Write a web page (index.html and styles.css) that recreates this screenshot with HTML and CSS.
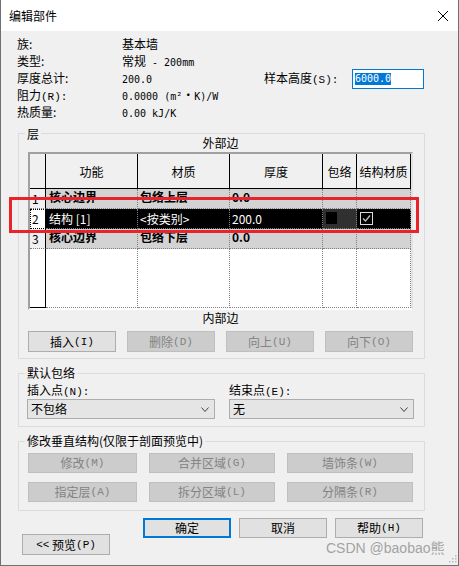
FILE: index.html
```html
<!DOCTYPE html>
<html lang="zh-CN">
<head>
<meta charset="utf-8">
<title>编辑部件</title>
<link rel="stylesheet" href="styles.css">
</head>
<body>
<div class="window">
  <div class="titlebar">
    <span class="title">编辑部件</span>
    <svg class="close" width="10" height="10" viewBox="0 0 10 10"><path d="M0 0L10 10M10 0L0 10" stroke="#000" stroke-width="1" fill="none"/></svg>
  </div>
  <div class="client">
    <div class="info">
      <div class="k">族:</div><div>基本墙</div>
      <div class="k">类型:</div><div>常规<span class="n"> - 200mm</span></div>
      <div class="k">厚度总计:</div><div><span class="n">200.0</span></div><div class="k2">样本高度<span class="m">(S):</span></div><div class="input"><span class="hl">6000.0</span></div>
      <div class="k">阻力<span class="m">(R):</span></div><div><span class="n">0.0000 (m²</span><span class="dot">·</span><span class="n">K)/W</span></div>
      <div class="k">热质量:</div><div><span class="n">0.00 kJ/K</span></div>
    </div>

    <div class="group g-layers">
      <div class="gtitle">层</div>
      <div class="edge edge-top">外部边</div>
      <div class="table">
        <div class="th"></div><div class="th">功能</div><div class="th">材质</div><div class="th">厚度</div><div class="th">包络</div><div class="th">结构材质</div>

        <div class="rh">1</div><div class="td core c1">核心边界</div><div class="td core">包络上层</div><div class="td core">0.0</div><div class="td core"></div><div class="td core"></div>

        <div class="rh focus">2</div><div class="td cur c1">结构 [1]</div><div class="td cur">&lt;按类别&gt;</div><div class="td cur">200.0</div><div class="td cur wrapc"><span class="sq"></span></div><div class="td cur ck"><svg class="chk" width="13" height="13" viewBox="0 0 13 13"><rect x="0.5" y="0.5" width="12" height="12" fill="none" stroke="#dcdcdc"/><polyline points="3,6.5 5.5,9 10,3.5" fill="none" stroke="#c4c4c4" stroke-width="1.2"/></svg></div>

        <div class="rh">3</div><div class="td core c1">核心边界</div><div class="td core">包络下层</div><div class="td core">0.0</div><div class="td core"></div><div class="td core"></div>

        <div class="rh fill"></div><div class="td fill"></div><div class="td fill"></div><div class="td fill"></div><div class="td fill"></div><div class="td fill"></div>
      </div>
      <div class="edge">内部边</div>
      <div class="btnrow">
        <div class="btn">插入<span class="m">(I)</span></div>
        <div class="btn dis">删除<span class="m">(D)</span></div>
        <div class="btn dis">向上<span class="m">(U)</span></div>
        <div class="btn dis">向下<span class="m">(O)</span></div>
      </div>
    </div>

    <div class="group g-wrap">
      <div class="gtitle">默认包络</div>
      <div class="cols">
        <div>
          <div class="lab">插入点<span class="m">(N):</span></div>
          <div class="select"><span>不包络</span><svg width="8" height="5" viewBox="0 0 8 5"><polyline points="0.5,0.5 4,4.5 7.5,0.5" fill="none" stroke="#404040"/></svg></div>
        </div>
        <div>
          <div class="lab">结束点<span class="m">(E):</span></div>
          <div class="select"><span>无</span><svg width="8" height="5" viewBox="0 0 8 5"><polyline points="0.5,0.5 4,4.5 7.5,0.5" fill="none" stroke="#404040"/></svg></div>
        </div>
      </div>
    </div>

    <div class="group g-mod">
      <div class="gtitle">修改垂直结构(仅限于剖面预览中)</div>
      <div class="grid-btns">
        <div class="btn dis">修改<span class="m">(M)</span></div>
        <div class="btn dis">合并区域<span class="m">(G)</span></div>
        <div class="btn dis">墙饰条<span class="m">(W)</span></div>
        <div class="btn dis">指定层<span class="m">(A)</span></div>
        <div class="btn dis">拆分区域<span class="m">(L)</span></div>
        <div class="btn dis">分隔条<span class="m">(R)</span></div>
      </div>
    </div>

    <div class="footer">
      <div class="btn preview"><span class="m">&lt;&lt;</span>&nbsp;预览<span class="m">(P)</span></div>
      <div class="btn ok">确定</div>
      <div class="btn">取消</div>
      <div class="btn">帮助<span class="m">(H)</span></div>
    </div>
  </div>

  <div class="redbox"></div>
  <div class="watermark">CSDN @baobao熊</div>
  <svg class="grip" width="10" height="10" viewBox="0 0 10 10">
    <rect x="8" y="1" width="1.5" height="1.5" fill="#b8b8b8"/>
    <rect x="5" y="4" width="1.5" height="1.5" fill="#b8b8b8"/>
    <rect x="8" y="4" width="1.5" height="1.5" fill="#b8b8b8"/>
    <rect x="2" y="7" width="1.5" height="1.5" fill="#b8b8b8"/>
    <rect x="5" y="7" width="1.5" height="1.5" fill="#b8b8b8"/>
    <rect x="8" y="7" width="1.5" height="1.5" fill="#b8b8b8"/>
  </svg>
</div>
</body>
</html>
```

FILE: styles.css
```css
* { box-sizing: border-box; }
html, body { margin: 0; padding: 0; }
body {
  width: 459px;
  height: 566px;
  overflow: hidden;
  background: #f0f0f0;
  font-family: "Noto Sans CJK SC", "Microsoft YaHei UI", sans-serif;
  font-size: 12px;
  color: #000;
}
.window {
  position: relative;
  width: 459px;
  height: 566px;
  display: flex;
  flex-direction: column;
  background: #f0f0f0;
  border-left: 1px solid #707070;
  border-right: 1px solid #707070;
  border-bottom: 1px solid #707070;
}
.titlebar {
  flex: none;
  height: 31px;
  background: #fff;
  display: flex;
  align-items: center;
  justify-content: space-between;
  padding: 0 10px 0 8px;
}
.title { line-height: 16px; }
.close { display: block; }

.client { flex: 1; padding-top: 4px; }

.n { font-family: "DejaVu Sans Mono", monospace; font-size: 10px; }
.m { font-family: "Liberation Mono", monospace; font-size: 11px; }
.dot { display: inline-block; width: 12px; text-align: center; }

/* info block */
.info {
  display: grid;
  grid-template-columns: 105px 142px 88px 72px;
  grid-auto-rows: 17px;
  line-height: 17px;
  margin-left: 16px;
  white-space: nowrap;
}
.info .k { grid-column: 1; }
.info .k2 { grid-column: 3; }
.input {
  align-self: start;
  height: 20px;
  background: #fff;
  border: 1px solid #0078d7;
  padding: 3px 0 0 2px;
  line-height: 12px;
}
.hl {
  display: inline-block;
  height: 12px;
  line-height: 12px;
  background: #0078d7;
  color: #fff;
  font-family: "DejaVu Sans Mono", monospace;
  font-size: 10px;
  vertical-align: top;
}

/* group boxes */
.group {
  margin-left: 17px;
  width: 407px;
  border: 1px solid #dcdcdc;
}
.gtitle {
  width: max-content;
  margin: -7px 0 0 6px;
  padding: 0 2px;
  line-height: 14px;
  background: #f0f0f0;
  white-space: nowrap;
}
.g-layers { margin-top: 13px; padding-bottom: 6px; }
.g-wrap { margin-top: 14px; padding-bottom: 7px; }
.g-wrap .gtitle { margin-top: -8px; }
.g-mod { margin-top: 14px; padding-bottom: 8px; }
.g-mod .gtitle { margin-top: -8px; line-height: 14px; }

.edge {
  width: 385px;
  margin-left: 9px;
  margin-top: 1px;
  text-align: center;
  line-height: 14px;
}
.edge-top { margin-top: -4px; line-height: 12px; }

/* layers table */
.table {
  display: grid;
  grid-template-columns: 16px 92px 92px 93px 34px 54px;
  grid-template-rows: 35px 20px 20px 20px 59px;
  width: 385px;
  margin: 3px 0 0 9px;
  border: 2px solid;
  border-color: #a0a0a0 #e3e3e3 #ffffff #a0a0a0;
  background: #fff;
}
.th {
  background: #f0f0f0;
  border-right: 1px solid #000;
  border-bottom: 1px solid #000;
  display: flex;
  align-items: center;
  justify-content: center;
  padding-top: 1px;
  white-space: nowrap;
}
.rh {
  background: #f0f0f0;
  border-right: 1px solid #000;
  border-bottom: 1px dotted #808080;
  padding-left: 2px;
  line-height: 19px;
}
.rh.focus {
  background: #fff;
  outline: 1px dotted #000;
  outline-offset: -1px;
}
.rh.fill { background: #fff; border-bottom: 1px solid #000; }
.td {
  border-right: 1px dotted #808080;
  border-bottom: 1px dotted #808080;
  padding-left: 2px;
  white-space: nowrap;
}
.td.c1 { padding-left: 3px; }
.core { background: #d3d3d3; font-weight: bold; line-height: 16px; }
.cur { background: #000; color: #fff; line-height: 19px; }
.td.fill { background: #fff; }
.wrapc { background: #303030; padding: 3px 0 0 3px; }
.sq { display: block; width: 11px; height: 12px; background: #000; }
.ck { padding: 3px 0 0 3px; }
.chk { display: block; }

/* buttons */
.btn {
  width: 88px;
  height: 21px;
  border: 1px solid #adadad;
  background: #e1e1e1;
  display: flex;
  align-items: center;
  justify-content: center;
  line-height: 14px;
  white-space: nowrap;
}
.btn.dis { background: #cccccc; border-color: #bfbfbf; color: #838383; }
.btn.ok { border: 2px solid #0078d7; }
.btnrow { display: flex; gap: 11px; margin: 6px 0 0 9px; }

.cols {
  display: grid;
  grid-template-columns: 188px 185px;
  column-gap: 14px;
  margin: 3px 0 0 8px;
}
.lab { line-height: 14px; white-space: nowrap; }
.select {
  margin-top: 0;
  height: 20px;
  border: 1px solid #adadad;
  background: #e5e5e5;
  display: flex;
  align-items: center;
  justify-content: space-between;
  padding: 0 5px 0 3px;
  line-height: 14px;
}
.select svg { display: block; }

.grid-btns {
  display: grid;
  grid-template-columns: 109px 126px 126px;
  grid-auto-rows: 20px;
  gap: 9px 12px;
  margin: 5px 0 0 9px;
}
.grid-btns .btn { width: auto; height: 20px; }

.footer {
  display: flex;
  align-items: flex-start;
  gap: 8px;
  margin: 7px 0 0 21px;
}
.footer .btn { height: 20px; }
.footer .preview { height: 21px; margin-top: 16px; margin-right: 25px; }

/* overlays */
.redbox {
  position: absolute;
  left: 8px;
  top: 197px;
  width: 410px;
  height: 36px;
  border: 3px solid #e8232b;
}
.watermark {
  position: absolute;
  left: 325px;
  top: 540px;
  font-family: "Liberation Sans", "Noto Sans CJK SC", sans-serif;
  font-size: 14px;
  line-height: 16px;
  color: #a3a3a3;
  white-space: nowrap;
}
.grip { position: absolute; right: 1px; bottom: 1px; }
```
